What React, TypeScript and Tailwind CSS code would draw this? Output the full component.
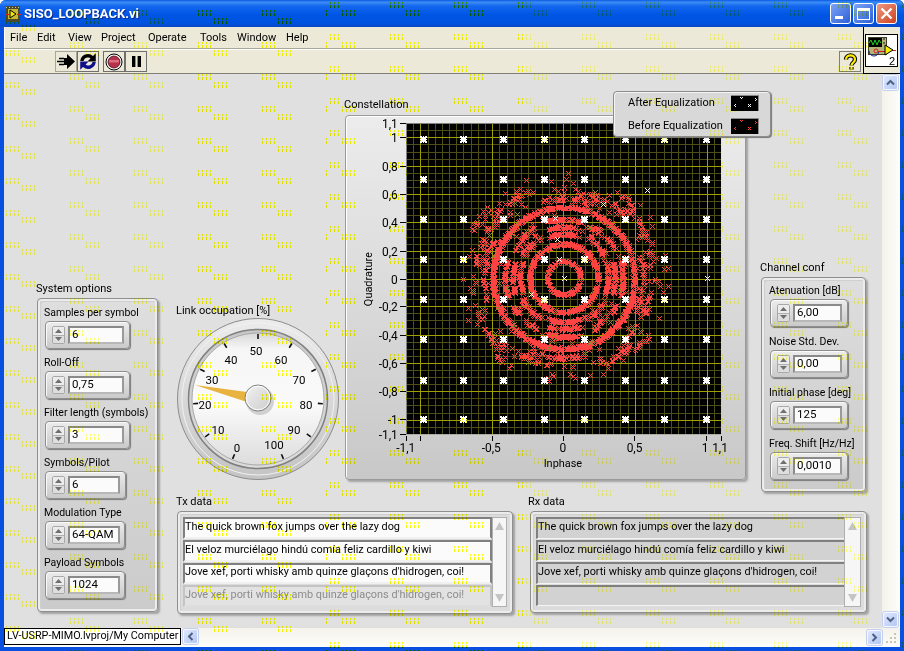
import React from "react";

const mulberry = (s: number) => () => {
  s |= 0; s = (s + 0x6d2b79f5) | 0;
  let t = Math.imul(s ^ (s >>> 15), 1 | s);
  t = (t + Math.imul(t ^ (t >>> 7), 61 | t)) ^ t;
  return ((t ^ (t >>> 14)) >>> 0) / 4294967296;
};
const CX = 564, CY = 278;
const markX = (x: number, y: number) => {
  const px = Math.round(x), py = Math.round(y);
  let d = "";
  for (const [a, b] of [[-2,-2],[2,-2],[-1,-1],[1,-1],[0,0],[-1,1],[1,1],[-2,2],[2,2]]) d += `M${px + a} ${py + b}h1v1h-1z`;
  return d;
};
const buildRed = () => {
  const r = mulberry(7);
  let d = "";
  const pt = (rad: number, ang: number, w: number) => {
    const rr = rad + (r() - 0.5) * w;
    d += markX(CX + rr * Math.cos(ang), CY + rr * Math.sin(ang));
  };
  const ring = (rad: number, n: number, w: number) => { for (let i = 0; i < n; i++) pt(rad, r() * Math.PI * 2, w); };
  ring(16.5, 170, 1.5); ring(34, 320, 2); ring(71, 820, 3);
  const arcs = (rad: number, half: number, n: number, w: number, off = 0) => {
    for (let q = 0; q < 4; q++) for (let i = 0; i < n; i++) pt(rad, off + (q * Math.PI) / 2 + (r() * 2 - 1) * half, w);
  };
  arcs(44, 0.36, 42, 2); arcs(51, 0.3, 42, 2); arcs(59, 0.3, 44, 2.5);
  arcs(58, 0.28, 24, 5, Math.PI / 4); arcs(47, 0.3, 24, 5, Math.PI / 4);
  ring(55, 70, 26);
  arcs(80, 0.38, 36, 4, 0.1); arcs(88, 0.3, 26, 5, 0.45); arcs(94, 0.25, 22, 5, 0.95);
  ring(84, 70, 24); ring(97, 90, 20);
  arcs(102, 0.14, 9, 7, 0.65);
  return d;
};
const RED = buildRed();
const buildOlive = () => {
  const r = mulberry(21);
  let d = "";
  for (let i = 0; i < 30; i++) {
    const a = r() * Math.PI * 2, rr = 55 + r() * 42;
    d += markX(CX + rr * Math.cos(a), CY + rr * Math.sin(a));
  }
  return d;
};
const OLIVE = buildOlive();
const THIN = [[564,278],[559,259],[557,239],[555,218],[531,294],[603,203],[648,189],[708,278]].map(([x,y]) => markX(x,y)).join("");
const Q_X = [422,463,503,544,584,625,665,707];
const Q_Y = [138,178,219,259,299,339,380,420];
const BLOB = ["XX.X.XX","XXXXXXX",".XXXXX.","XXXXXXX",".XXXXX.","XXXXXXX","XX.X.XX"];
const WHITE = Q_X.flatMap((x) => Q_Y.map((y) => {
  let d = "";
  BLOB.forEach((row, j) => row.split("").forEach((c, i) => { if (c === "X") d += `M${x - 3 + i} ${y - 3 + j}h1v1h-1z`; }));
  return d;
})).join("");

const yTicks: [number, string][] = [[123,"1,1"],[137,"1"],[166,"0,8"],[194,"0,6"],[222,"0,4"],[251,"0,2"],[279,"0"],[307,"-0,2"],[336,"-0,4"],[364,"-0,6"],[392,"-0,8"],[420,"-1"],[435,"-1,1"]];
const xTicks: [number, string, number][] = [[406,"-1,1",405],[420,"",0],[492,"-0,5",491],[564,"0",563],[635,"0,5",635],[707,"1",706],[722,"1,1",721]];

function Plot() {
  const v: number[] = [], h: number[] = [];
  for (let k = -22; k <= 22; k++) { v.push(k); h.push(k); }
  return (
    <svg className="block w-full h-full" viewBox="345 115 401 365" shapeRendering="crispEdges">
      <defs><clipPath id="plotclip"><rect x="405" y="122" width="317" height="313" /></clipPath></defs>
      <rect x="405" y="122" width="317" height="313" fill="#000" />
      <g clipPath="url(#plotclip)">
        {v.map((k) => <line key={"a" + k} x1={Math.round(564 + k * 7.18)} x2={Math.round(564 + k * 7.18)} y1="122" y2="435" stroke="#4e4e18" />)}
        {h.map((k) => <line key={"b" + k} y1={Math.round(279 + k * 7.08)} y2={Math.round(279 + k * 7.08)} x1="405" x2="722" stroke="#4e4e18" />)}
        {v.filter((k) => k % 10 === 0).map((k) => <line key={"c" + k} x1={Math.round(564 + k * 7.18)} x2={Math.round(564 + k * 7.18)} y1="122" y2="435" stroke="#a0a000" />)}
        {h.filter((k) => k % 4 === 0).map((k) => <line key={"d" + k} y1={Math.round(279 + k * 7.08)} y2={Math.round(279 + k * 7.08)} x1="405" x2="722" stroke="#a0a000" />)}
        <path d={RED} fill="#ff4242" />
        <path d={OLIVE} fill="#8e8e2e" />
        <path d={THIN} fill="#fff" />
        <path d={WHITE} fill="#fff" />
        <path d="M418 396h1v1h-1zM543 396h1v1h-1zM418 432h1v1h-1zM543 432h1v1h-1zM583 396h1v1h-1z" fill="#2020d0" />
      </g>
      <path d="M405.5 435V122.5H722" fill="none" stroke="#808080" />
      {yTicks.map(([y, t]) => (
        <g key={t}>
          <line x1="399" x2="405" y1={y} y2={y} stroke="#000" />
          <text x="397" y={y + 4.5} textAnchor="end" fontSize="12" fill="#000">{t}</text>
        </g>
      ))}
      {xTicks.map(([x, t, tx]) => (
        <g key={x}>
          <line x1={x} x2={x} y1="437" y2="442" stroke="#000" />
          {t && <text x={tx} y="453" textAnchor="middle" fontSize="12" fill="#000">{t}</text>}
        </g>
      ))}
      <text x="563" y="468" textAnchor="middle" fontSize="11" fill="#000">Inphase</text>
      <text transform="translate(371 279) rotate(-90)" textAnchor="middle" fontSize="11" fill="#000">Quadrature</text>
    </svg>
  );
}

function Gauge() {
  const cx = 81, cy = 81;
  const labels: [string, number, number][] = [["50",79,32],["40",54,41],["30",35,61],["20",28,86],["10",41,111],["0",60,129],["100",97,126],["90",117,111],["80",129,86],["70",122,61],["60",104,41]];
  const ticks = Array.from({ length: 11 }, (_, i) => {
    const a = ((-157 + i * 31.4 - 90) * Math.PI) / 180;
    return { x1: cx + 60 * Math.cos(a), y1: cy + 60 * Math.sin(a), x2: cx + 65 * Math.cos(a), y2: cy + 65 * Math.sin(a) };
  });
  return (
    <svg width="164" height="164" viewBox="0 0 164 164" className="block">
      <defs>
        <linearGradient id="rim" x1="0" y1="0" x2="0" y2="1"><stop offset="0" stopColor="#ececec" /><stop offset="1" stopColor="#c4c4c4" /></linearGradient>
        <linearGradient id="rim2" x1="0" y1="0" x2="0" y2="1"><stop offset="0" stopColor="#c8c8c8" /><stop offset="1" stopColor="#dcdcdc" /></linearGradient>
        <linearGradient id="face" x1="0" y1="0" x2="0" y2="1"><stop offset="0" stopColor="#d8d8d8" /><stop offset="0.12" stopColor="#f6f6f6" /><stop offset="0.55" stopColor="#fafafa" /><stop offset="1" stopColor="#dcdcdc" /></linearGradient>
        <linearGradient id="knob" x1="0" y1="0" x2="1" y2="1"><stop offset="0" stopColor="#f2f2f2" /><stop offset="1" stopColor="#cccccc" /></linearGradient>
      </defs>
      <circle cx={cx} cy={cy} r="80.5" fill="url(#rim)" stroke="#8c8c8c" />
      <circle cx={cx} cy={cy} r="76" fill="none" stroke="#f2f2f2" strokeWidth="1" />
      <circle cx={cx} cy={cy} r="69.5" fill="url(#rim2)" stroke="#808080" strokeWidth="1.5" />
      <circle cx={cx} cy={cy} r="66" fill="url(#face)" stroke="#a8a8a8" />
      {ticks.map((t, i) => <line key={i} {...t} stroke="#111" strokeWidth="1.6" />)}
      {labels.map(([t, x, y]) => <text key={t} x={x} y={y + 4.5} textAnchor="middle" fontSize="11.5" fill="#000">{t}</text>)}
      <polygon points="18,67 70,74 70,84" fill="#e8b33e" />
      <circle cx="83" cy="83" r="14" fill="#aaaaaa" opacity="0.5" />
      <circle cx={cx} cy={cy - 1} r="13" fill="url(#knob)" stroke="#7e7e7e" strokeWidth="1" />
      <circle cx={cx} cy={cy - 1} r="11.8" fill="none" stroke="#ffffff" strokeWidth="1" />
    </svg>
  );
}

const Tri = ({ down, c = "#6e6e6e" }: { down?: boolean; c?: string }) => (
  <svg width="7" height="4" viewBox="0 0 7 4" className="block"><polygon points={down ? "0,0 7,0 3.5,4" : "0,4 7,4 3.5,0"} fill={c} /></svg>
);

const Spin = () => (
  <div className="flex flex-col w-[13px] h-[18px] shrink-0 border border-[#a8a8a8] rounded-[2px] bg-[#dedede]">
    <div className="flex-1 flex items-center justify-center border-b border-[#b0b0b0] bg-[#ececec]"><Tri /></div>
    <div className="flex-1 flex items-center justify-center bg-[#dedede]"><Tri down /></div>
  </div>
);

function Numeric({ value, w, dw }: { value: string; w: string; dw: string }) {
  return (
    <div className={`flex items-center gap-[3px] pl-[6px] h-[28px] rounded-[4px] border border-[#8e8e8e] bg-[linear-gradient(180deg,#ececec,#cacaca)] shadow-[inset_1px_1px_0_#fafafa,1px_1px_1px_#7a7a7a] ${w}`}>
      <Spin />
      <div className={`h-[18px] flex items-center pl-[2px] border-2 border-t-[#8a8a8a] border-l-[#8a8a8a] border-r-[#9a9a9a] border-b-[#b8b8b8] bg-[#fbfbfb] text-[11.5px] leading-none ${dw}`}>{value}</div>
    </div>
  );
}

function Field({ label, ...rest }: { label: string; value: string; w: string; dw: string }) {
  return (
    <div className="flex flex-col">
      <div className="h-[15px] leading-[15px] text-[10.5px] whitespace-nowrap -ml-[1px]">{label}</div>
      <div className="mt-[1px]"><Numeric {...rest} /></div>
    </div>
  );
}

const panelCls = "rounded-[4px] border border-[#8f8f8f] shadow-[inset_0_0_0_2px_#ececec,inset_3px_3px_0_#cfcfcf,2px_2px_2px_#a2a2a2]";

function ListPanel({ rows, tx, cls, rowW, sbW }: { rows: string[]; tx?: boolean; cls: string; rowW: string; sbW: string }) {
  return (
    <div className={`absolute top-[437px] flex p-[5px] bg-[#dcdcdc] ${panelCls} ${cls}`}>
      <div className={`flex flex-col ${rowW}`}>
        {rows.map((t, i) => {
          const dis = tx && i === 3;
          const style = tx
            ? dis
              ? "border-2 border-t-[#c4c4c4] border-l-[#c4c4c4] border-r-[#c4c4c4] border-b-[#dddddd] bg-[#e2e2e2] text-[#8c8c8c]"
              : "border-2 border-t-[#808080] border-l-[#808080] border-r-[#808080] border-b-[#f0f0f0] bg-[#fbfbfb]"
            : "border-l-2 border-t-2 border-r-0 border-b border-t-[#808080] border-l-[#808080] border-b-[#f4f4f4] bg-[#d2d2d2]";
          return <div key={i} className={`h-[22px] mb-[1px] pb-[1px] flex items-center whitespace-nowrap leading-none text-[10.9px] ${style}`}>{t}</div>;
        })}
      </div>
      <div className={`flex flex-col justify-between items-center py-[4px] border border-[#b0b0b0] bg-[#f6f6f6] ${sbW}`}>
        <svg width="9" height="8" viewBox="0 0 9 8"><polygon points="0,8 9,8 4.5,0" fill="#c4c4c4" /></svg>
        <svg width="9" height="8" viewBox="0 0 9 8"><polygon points="0,0 9,0 4.5,8" fill="#c4c4c4" /></svg>
      </div>
    </div>
  );
}

const Arrow = ({ d }: { d: string }) => (
  <div className="w-[15px] h-[15px] rounded-[2px] border border-[#f4f7ff] bg-[linear-gradient(135deg,#dfe8fd,#b4c6f2)] shadow-[0_0_0_1px_#c4d0ee] flex items-center justify-center shrink-0">
    <svg width="9" height="9" viewBox="0 0 9 9"><path d={d} fill="none" stroke="#4d6185" strokeWidth="2" /></svg>
  </div>
);

const ToolBtn = ({ children, dark }: { children: React.ReactNode; dark?: boolean }) => (
  <div className={`w-[22px] h-[21px] flex items-center justify-center border ${dark ? "border-[#6f6f6f]" : "border-[#a8a898]"}`}>{children}</div>
);

function Dots() {
  const grp = (x: number, y: number) => {
    let d = "";
    for (let i = 0; i < 4; i++) d += `M${x + i * 4} ${y}h1v2h-1zM${x + i * 4} ${y + 3}h1v3h-1z`;
    return d;
  };
  const pat = (id: string, y1: number, y2: number) => (
    <pattern id={id} width="64" height="32" patternUnits="userSpaceOnUse">
      <path d={grp(6, y1) + grp(22, y2)} fill="#ffff00" />
    </pattern>
  );
  return (
    <svg className="absolute inset-0 pointer-events-none mix-blend-multiply" width="904" height="651" shapeRendering="crispEdges">
      <defs>{pat("dotA", 18, 25)}{pat("dotB", 10, 18)}{pat("dotC", 2, 10)}</defs>
      <rect x="0" y="0" width="64" height="651" fill="url(#dotA)" opacity="0.7" />
      <rect x="64" y="0" width="108" height="651" fill="url(#dotB)" opacity="0.6" />
      <rect x="172" y="0" width="158" height="651" fill="url(#dotB)" />
      <rect x="330" y="0" width="195" height="651" fill="url(#dotC)" />
      <rect x="525" y="0" width="379" height="651" fill="url(#dotC)" opacity="0.5" />
    </svg>
  );
}

export default function App() {
  const tx = ["The quick brown fox jumps over the lazy dog","El veloz murciélago hindú comía feliz cardillo y kiwi","Jove xef, porti whisky amb quinze glaçons d'hidrogen, coi!","Jove xef, porti whisky amb quinze glaçons d'hidrogen, coi!"];
  const rx = [tx[0], tx[1], tx[2], ""];
  return (
    <div className="relative w-[904px] h-[651px] overflow-hidden flex flex-col bg-[#0a50e0] rounded-t-[6px] font-['Roboto',sans-serif] text-[11px] text-black">
      {/* title bar */}
      <div className="h-[27px] shrink-0 flex items-center pl-[5px] pr-[7px] bg-[linear-gradient(180deg,#0a5ae6_0%,#3d8df6_8%,#1468ee_22%,#0055e5_55%,#0053df_85%,#0a48c8_100%)]">
        <svg width="16" height="16" viewBox="0 0 16 16" className="shrink-0" shapeRendering="crispEdges">
          <rect x="1" y="0" width="14" height="16" fill="#4a4a30" />
          <rect x="1" y="1" width="1" height="1" fill="#c8c8a0" /><rect x="4" y="1" width="1" height="1" fill="#c8c8a0" /><rect x="7" y="1" width="1" height="1" fill="#c8c8a0" /><rect x="10" y="1" width="1" height="1" fill="#c8c8a0" /><rect x="13" y="1" width="1" height="1" fill="#c8c8a0" />
          <rect x="3" y="3" width="10" height="10" fill="#c8b830" />
          <path d="M5 4l6 4-6 4z" fill="#f4e800" stroke="#000" shapeRendering="auto" />
          <path d="M0 8h4M12 8h4" stroke="#e02020" />
        </svg>
        <span className="ml-[3px] text-white font-bold text-[13px] [text-shadow:1px_1px_0_#0a2a90]">SISO_LOOPBACK.vi</span>
        <div className="ml-auto flex gap-[2px]">
          <div className="w-[21px] h-[21px] rounded-[3px] border border-white bg-[linear-gradient(135deg,#7ea4f6,#2c5fd8)] flex items-end pl-[4px] pb-[4px]"><div className="w-[8px] h-[3px] bg-white" /></div>
          <div className="w-[21px] h-[21px] rounded-[3px] border border-white bg-[linear-gradient(135deg,#7ea4f6,#2c5fd8)] flex items-center justify-center"><div className="w-[13px] h-[12px] border border-white border-t-[3px]" /></div>
          <div className="w-[21px] h-[21px] rounded-[3px] border border-white bg-[linear-gradient(135deg,#ee9a80,#cf4020)] flex items-center justify-center">
            <svg width="13" height="13" viewBox="0 0 13 13"><path d="M1.5 1.5l10 10M11.5 1.5l-10 10" stroke="#fff" strokeWidth="2.4" /></svg>
          </div>
        </div>
      </div>

      {/* client */}
      <div className="flex-1 mx-[4px] mb-[4px] flex flex-col bg-[#e0e0e0]">
        {/* menu + toolbar */}
        <div className="h-[47px] shrink-0 flex bg-[#ece9d8]">
          <div className="flex-1 flex flex-col">
            <div className="h-[22px] flex items-center pl-[5px] pt-[2px] border-b border-[#a8a79c] border-l border-l-white text-[11px]">
              <span className="w-[27px]">File</span><span className="w-[31px]">Edit</span><span className="w-[33px]">View</span><span className="w-[47px]">Project</span><span className="w-[52px]">Operate</span><span className="w-[37px]">Tools</span><span className="w-[49px]">Window</span><span>Help</span>
            </div>
            <div className="flex-1 flex items-center pl-[51px] pr-[2px] border-t border-white border-b border-b-[#808074]">
              <ToolBtn>
                <svg width="19" height="17" viewBox="0 0 19 17"><path d="M10 1l8 7.5L10 16v-4H7V5h3z" fill="#000" /><path d="M2 5.5h5M0 8.5h7M2 11.5h5" stroke="#000" strokeWidth="1.4" /></svg>
              </ToolBtn>
              <ToolBtn dark>
                <svg width="20" height="19" viewBox="0 0 18 17"><path d="M2 8a7 7 0 0 1 11.5-4.5L16 1v7.5H8.5l2.7-2.7A3.8 3.8 0 0 0 5 8z" fill="#000" /><path d="M16 9a7 7 0 0 1-11.5 4.5L2 16V8.5h7.5l-2.7 2.7A3.8 3.8 0 0 0 13 9z" fill="#10108c" /></svg>
              </ToolBtn>
              <div className="w-[4px]" />
              <ToolBtn dark>
                <svg width="18" height="18" viewBox="0 0 18 18"><circle cx="9" cy="9" r="8" fill="#fff" stroke="#000" /><circle cx="9" cy="9" r="6" fill="#b8304a" stroke="#401018" strokeWidth="0.8" /><rect x="4" y="7" width="10" height="2.5" fill="#d8707f" /></svg>
              </ToolBtn>
              <ToolBtn dark>
                <svg width="13" height="13" viewBox="0 0 13 13"><rect x="2" y="1" width="3.4" height="11" fill="#000" /><rect x="7.6" y="1" width="3.4" height="11" fill="#000" /></svg>
              </ToolBtn>
              <div className="ml-auto w-[22px] h-[21px] border border-[#808074] flex items-center justify-center">
                <svg width="15" height="18" viewBox="0 0 15 18"><path d="M3 6.5c0-5.500 9-5.500 9 0 0 3-3.500 3-3.500 6M8.500 14v2.500" fill="none" stroke="#000" strokeWidth="4.2" /><path d="M3 6.5c0-5.500 9-5.500 9 0 0 3-3.500 3-3.500 6M8.500 14v2.500" fill="none" stroke="#ffec00" strokeWidth="2.2" /></svg>
              </div>
            </div>
          </div>
          <div className="w-[37px] shrink-0 border-l border-b border-black pl-[1px] pt-[7px]">
            <svg width="33" height="33" viewBox="0 0 33 33" className="block" shapeRendering="crispEdges">
              <rect x="0.5" y="0.5" width="32" height="32" fill="#fff" stroke="#000" />
              <rect x="3" y="3" width="18" height="17" fill="#b4b478" stroke="#404020" />
              <rect x="4" y="4" width="13" height="9" fill="#000" />
              <path d="M4 9l2-3 2 5 2-5 2 5 2-5 2 3" fill="none" stroke="#20d020" shapeRendering="auto" />
              <rect x="18" y="4" width="2" height="2" fill="#606060" /><rect x="18" y="8" width="2" height="2" fill="#606060" />
              <path d="M4 17a5 5 0 0 0 10 0" fill="none" stroke="#1020a0" shapeRendering="auto" />
              <circle cx="11" cy="17" r="2" fill="none" stroke="#d02020" shapeRendering="auto" />
              <path d="M13 17h8M27 16h4" stroke="#d02020" />
              <path d="M20 11l8 5-8 5z" fill="#f8ec00" stroke="#000" shapeRendering="auto" />
              <text x="24" y="31" fontSize="11" fill="#000" fontFamily="Liberation Sans">2</text>
            </svg>
          </div>
        </div>

        {/* canvas + v scroll */}
        <div className="flex-1 flex min-h-0">
          <div className="relative flex-1 bg-[#e0e0e0] overflow-hidden">
            <span className="absolute left-[32px] top-[207px] leading-[15px]">System options</span>
            <div className={`absolute left-[33px] top-[224px] w-[121px] h-[314px] pt-[6px] pl-[7px] flex flex-col gap-[6px] bg-[linear-gradient(180deg,#dedede,#cbcbcb)] ${panelCls}`}>
              <Field label="Samples per symbol" value="6" w="w-[85px]" dw="w-[56px]" />
              <Field label="Roll-Off" value="0,75" w="w-[85px]" dw="w-[56px]" />
              <Field label="Filter length (symbols)" value="3" w="w-[85px]" dw="w-[56px]" />
              <Field label="Symbols/Pilot" value="6" w="w-[81px]" dw="w-[52px]" />
              <Field label="Modulation Type" value="64-QAM" w="w-[80px]" dw="w-[52px]" />
              <Field label="Payload Symbols" value="1024" w="w-[80px]" dw="w-[52px]" />
            </div>

            <span className="absolute left-[172px] top-[229px] leading-[15px]">Link occupation [%]</span>
            <div className="absolute left-[173px] top-[244px]"><Gauge /></div>

            <span className="absolute left-[340px] top-[23px] leading-[15px]">Constellation</span>
            <div className="absolute left-[341px] top-[41px] w-[401px] h-[365px] rounded-[4px] border border-[#9a9a9a] bg-[linear-gradient(180deg,#ececec,#c8c8c8)] shadow-[inset_1px_1px_0_#fff,2px_2px_2px_#a2a2a2]">
              <Plot />
            </div>
            <div className="absolute left-[609px] top-[17px] w-[158px] h-[46px] rounded-[4px] border border-[#8c8c8c] bg-[#d8d8d8] shadow-[inset_1px_1px_0_#f4f4f4,1px_1px_1px_#777] flex flex-col justify-center gap-[6px] pl-[14px] pr-[11px]">
              {["After Equalization", "Before Equalization"].map((t, i) => (
                <div key={t} className="flex items-center justify-between h-[17px]">
                  <span className="whitespace-nowrap pt-[2px]">{t}</span>
                  <svg width="28" height="16" viewBox="0 0 28 16" className="block shrink-0" shapeRendering="crispEdges">
                    <rect width="28" height="16" fill="#000" />
                    <path d="M0 .5H27.5V16" fill="none" stroke="#8a8a8a" />
                    <path d="M9 2h1v1H9zM10 3h1v1h-1zM11 2h1v1h-1zM4 9h1v1H4zM3 10h1v1H3zM4 11h1v1H4zM24 3h1v1h-1zM25 4h1v1h-1zM24 5h1v1h-1zM17 9h1v1h-1zM19 9h1v1h-1zM18 10h1v1h-1zM17 11h1v1h-1zM19 11h1v1h-1z" fill={i ? "#ff4040" : "#fff"} />
                  </svg>
                </div>
              ))}
            </div>

            <span className="absolute left-[172px] top-[420px] leading-[15px]">Tx data</span>
            <ListPanel rows={tx} tx cls="left-[173px] w-[336px] h-[103px]" rowW="w-[309px]" sbW="w-[15px] h-[90px]" />

            <span className="absolute left-[524px] top-[420px] leading-[15px]">Rx data</span>
            <ListPanel rows={rx} cls="left-[526px] w-[337px] h-[102px]" rowW="w-[309px]" sbW="w-[17px] h-[90px]" />

            <span className="absolute left-[756px] top-[186px] leading-[15px]">Channel conf</span>
            <div className={`absolute left-[757px] top-[203px] w-[105px] h-[215px] pt-[5px] pl-[8px] flex flex-col gap-[7px] bg-[linear-gradient(180deg,#dedede,#cbcbcb)] ${panelCls}`}>
              <Field label="Atenuation [dB]" value="6,00" w="w-[78px]" dw="w-[49px]" />
              <Field label="Noise Std. Dev." value="0,00" w="w-[78px]" dw="w-[49px]" />
              <Field label="Initial phase [deg]" value="125" w="w-[78px]" dw="w-[49px]" />
              <Field label="Freq. Shift [Hz/Hz]" value="0,0010" w="w-[78px]" dw="w-[49px]" />
            </div>
          </div>
          <div className="w-[18px] shrink-0 bg-[linear-gradient(90deg,#f4f2ea,#fdfdfa)] flex flex-col justify-between pl-[1px] py-[1px]">
            <Arrow d="M1 6.5l3.5-3.5 3.5 3.5" />
            <Arrow d="M1 2.5l3.5 3.5 3.5-3.5" />
          </div>
        </div>

        {/* bottom bar */}
        <div className="h-[19px] shrink-0 flex items-start bg-[linear-gradient(180deg,#f4f2ea,#fdfdfa)]">
          <div className="w-[177px] h-[17px] bg-white border border-black flex items-center pl-[2px] whitespace-nowrap overflow-hidden text-[10.8px] leading-none">LV-USRP-MIMO.lvproj/My Computer</div>
          <div className="ml-[2px] mt-[1px]"><Arrow d="M6.5 1L3 4.5 6.5 8" /></div>
          <div className="flex-1" />
          <div className="mt-[2px]"><Arrow d="M2.5 1L6 4.5 2.5 8" /></div>
          <div className="w-[18px] h-[19px] shrink-0 relative">
            <svg width="18" height="19" viewBox="0 0 18 19" shapeRendering="crispEdges" className="block"><path d="M12 5h2v2h-2zM8 9h2v2H8zM12 9h2v2h-2zM4 13h2v2H4zM8 13h2v2H8zM12 13h2v2h-2z" fill="#c8c5b4" /></svg>
          </div>
        </div>
      </div>
      <Dots />
    </div>
  );
}
